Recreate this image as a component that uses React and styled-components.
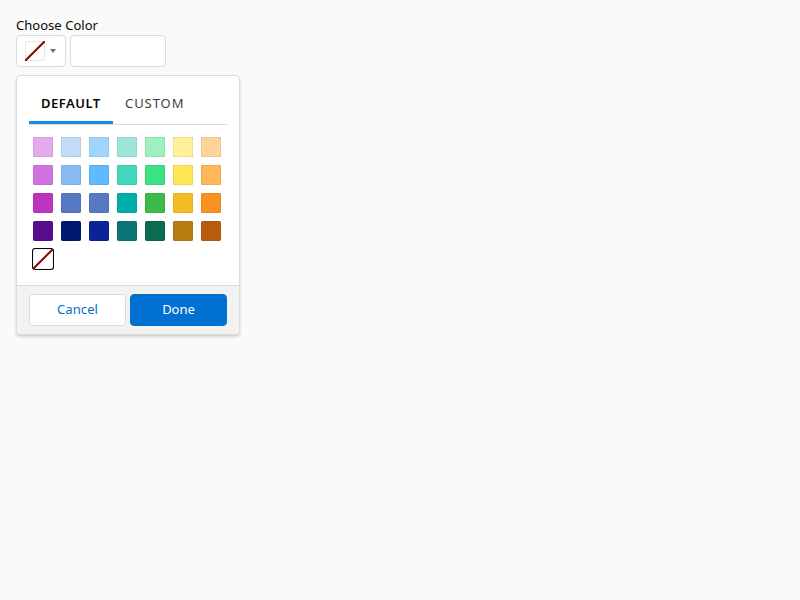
import React from "react";
import styled, { createGlobalStyle } from "styled-components";

const Global = createGlobalStyle`
  *, *::before, *::after { box-sizing: border-box; }
  body { margin: 0; background: #fafaf9; color: #080707; font: 13px/19.5px "Noto Sans", "Open Sans", sans-serif; }
  button, input { font: inherit; margin: 0; }
`;
const Page = styled.main`padding: 16px;`;
const Label = styled.label`display: block; height: 19px; line-height: 19px; letter-spacing: .03px;`;
const Controls = styled.div`display: flex; gap: 4px;`;
const Trigger = styled.button`
  display: flex; align-items: center; width: 50px; height: 32px; padding: 0 0 0 8px;
  background: #fff; border: 1px solid #dddbda; border-radius: 4px;
`;
const Arrow = styled.svg`display: block; margin-left: 5px;`;
const HexInput = styled.input`
  width: 96px; height: 32px; padding: 0 12px; background: #fff;
  border: 1px solid #dddbda; border-radius: 4px; outline: 0;
`;
const Popover = styled.section`
  width: 224px; margin-top: 8px; background: #fff; border: 1px solid #dddbda;
  border-radius: 4px; box-shadow: 0 2px 3px rgba(0,0,0,.16); overflow: hidden;
`;
const Body = styled.div`height: 209px; padding: 8px 12px;`;
const Tabs = styled.div`display: flex; height: 41px; border-bottom: 1px solid #dddbda;`;
const Tab = styled.button`
  width: 84px; height: 40px; padding: 0 0 2px 12px; border: 0; background: none; line-height: 38px;
  text-align: left; white-space: nowrap; letter-spacing: ${p => (p.$active ? ".5px" : ".95px")};
  color: ${p => (p.$active ? "#080707" : "#3e3e3c")}; font-weight: ${p => (p.$active ? 600 : 400)};
  box-shadow: ${p => (p.$active ? "inset 0 -3px #1589ee" : "none")};
`;
const Swatches = styled.div`display: grid; grid-template-columns: repeat(7, 20px); gap: 8px; padding: 12px 4px;`;
const Swatch = styled.button`
  display: block; width: 20px; height: 20px; padding: 0; border: 0;
  border-radius: 2px; background: ${p => p.$color}; box-shadow: inset 0 0 1px 0 rgba(0,0,0,.6);
`;
const EmptySwatch = styled.button`
  display: block; width: 20px; height: 20px; padding: 0; border: 0; border-radius: 2px;
  background: #fff; box-shadow: 0 0 0 1px #080707, inset 0 0 1px rgba(0,0,0,.5);
`;
const Slash = styled.svg`display: block;`;
const Footer = styled.footer`
  display: flex; gap: 4px; height: 49px; padding: 8px 12px; background: #f3f2f2; border-top: 1px solid #dddbda;
`;
const Action = styled.button`
  flex: 1; height: 32px; padding: 0; border-radius: 4px; border: 1px solid ${p => (p.$brand ? "#0070d2" : "#dddbda")};
  letter-spacing: ${p => (p.$brand ? "0" : ".1px")};
  color: ${p => (p.$brand ? "#fff" : "#0070d2")}; background: ${p => (p.$brand ? "#0070d2" : "#fff")};
`;

const colors = ["#e3abec","#c2dbf7","#9fd6ff","#9de7da","#9df0c0","#fff099","#fed49a",
"#d073e0","#86baf3","#5ebbff","#44d8be","#3be282","#ffe654","#ffb758",
"#bd35bd","#5779c1","#5779c1","#00aea9","#3cba4c","#f5bc25","#f99221",
"#580d8c","#001970","#0a2399","#0b7477","#0b6b50","#b67e11","#b85d0d"];

const NoColor = ({ outlined }) => (
  <Slash width="20" height="20" viewBox="0 0 20 20">
    {outlined && <rect x=".5" y=".5" width="19" height="19" rx="1.5" fill="#fff" stroke="#e6e6e6" />}
    <path d="M0 20 20 0" stroke="#870500" strokeWidth="2" />
  </Slash>
);

export default function App() {
  return <><Global /><Page>
    <Label htmlFor="color">Choose Color</Label>
    <Controls>
      <Trigger aria-label="Pick color"><NoColor outlined /><Arrow width="6" height="4"><path d="M0 0h6L3 4z" fill="#706e6b" /></Arrow></Trigger>
      <HexInput id="color" />
    </Controls>
    <Popover>
      <Body>
        <Tabs><Tab $active>DEFAULT</Tab><Tab>CUSTOM</Tab></Tabs>
        <Swatches>
          {colors.map((c, i) => <Swatch key={i} $color={c} aria-label={c} />)}
          <EmptySwatch aria-label="No color"><NoColor /></EmptySwatch>
        </Swatches>
      </Body>
      <Footer><Action>Cancel</Action><Action $brand>Done</Action></Footer>
    </Popover>
  </Page></>;
}
